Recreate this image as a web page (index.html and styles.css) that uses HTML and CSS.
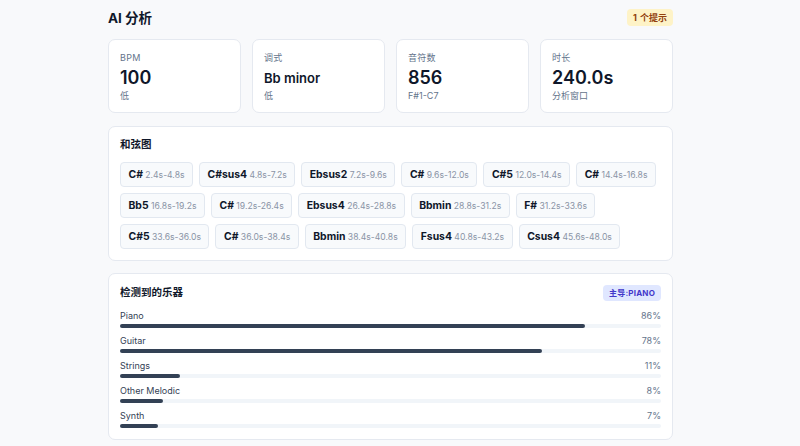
FILE: index.html
```html
<!DOCTYPE html>
<html lang="zh-CN">
<head>
  <meta charset="UTF-8" />
  <meta name="viewport" content="width=device-width, initial-scale=1.0"/>
  <title>AI 分析</title>
  <link rel="stylesheet" href="styles.css">
</head>
<body>
  <div class="page">
    <div class="page-header">
      <h1>AI 分析</h1>
      <span class="hint">1 个提示</span>
    </div>

    <div class="stats">
      <div class="stat">
        <div class="stat-label">BPM</div>
        <div class="stat-value">100</div>
        <div class="stat-sub">低</div>
      </div>
      <div class="stat">
        <div class="stat-label">调式</div>
        <div class="stat-value small">Bb minor</div>
        <div class="stat-sub">低</div>
      </div>
      <div class="stat">
        <div class="stat-label">音符数</div>
        <div class="stat-value">856</div>
        <div class="stat-sub">F#1-C7</div>
      </div>
      <div class="stat">
        <div class="stat-label">时长</div>
        <div class="stat-value">240.0s</div>
        <div class="stat-sub">分析窗口</div>
      </div>
    </div>

    <!-- 和弦图 -->
    <div class="card">
      <div class="card-title">和弦图</div>
      <div class="chords">
        <span class="chord"><b>C#</b> 2.4s-4.8s</span>
        <span class="chord"><b>C#sus4</b> 4.8s-7.2s</span>
        <span class="chord"><b>Ebsus2</b> 7.2s-9.6s</span>
        <span class="chord"><b>C#</b> 9.6s-12.0s</span>
        <span class="chord"><b>C#5</b> 12.0s-14.4s</span>
        <span class="chord"><b>C#</b> 14.4s-16.8s</span>
        <span class="chord"><b>Bb5</b> 16.8s-19.2s</span>
        <span class="chord"><b>C#</b> 19.2s-26.4s</span>
        <span class="chord"><b>Ebsus4</b> 26.4s-28.8s</span>
        <span class="chord"><b>Bbmin</b> 28.8s-31.2s</span>
        <span class="chord"><b>F#</b> 31.2s-33.6s</span>
        <span class="chord"><b>C#5</b> 33.6s-36.0s</span>
        <span class="chord"><b>C#</b> 36.0s-38.4s</span>
        <span class="chord"><b>Bbmin</b> 38.4s-40.8s</span>
        <span class="chord"><b>Fsus4</b> 40.8s-43.2s</span>
        <span class="chord"><b>Csus4</b> 45.6s-48.0s</span>
      </div>
    </div>

    <!-- 检测到的乐器 -->
    <div class="card">
      <div class="card-head">
        <div class="card-title">检测到的乐器</div>
        <span class="lead">主导:PIANO</span>
      </div>
      <div class="inst">
        <div class="inst-row"><span>Piano</span><span class="pct">86%</span></div>
        <div class="track"><div class="fill" style="width: 86%"></div></div>
      </div>
      <div class="inst">
        <div class="inst-row"><span>Guitar</span><span class="pct">78%</span></div>
        <div class="track"><div class="fill" style="width: 78%"></div></div>
      </div>
      <div class="inst">
        <div class="inst-row"><span>Strings</span><span class="pct">11%</span></div>
        <div class="track"><div class="fill" style="width: 11%"></div></div>
      </div>
      <div class="inst">
        <div class="inst-row"><span>Other Melodic</span><span class="pct">8%</span></div>
        <div class="track"><div class="fill" style="width: 8%"></div></div>
      </div>
      <div class="inst">
        <div class="inst-row"><span>Synth</span><span class="pct">7%</span></div>
        <div class="track"><div class="fill" style="width: 7%"></div></div>
      </div>
    </div>
  </div>
</body>
</html>
```

FILE: styles.css
```css
body {
  margin: 0; background: #f8f9fb; color: #0f172a;
  font-family: Inter, "Noto Sans CJK SC", sans-serif;
}
.page { width: 565px; margin-left: 108px; padding-top: 8px; }

.page-header {
  display: flex; justify-content: space-between; align-items: center;
  height: 18px; margin-bottom: 13px;
}
.page-header h1 { margin: 0; font-size: 13.5px; font-weight: 700; }
.hint {
  background: #fef3c7; color: #92400e; font-size: 9px; font-weight: 700;
  padding: 3px 6px; border-radius: 4px; line-height: 11px; word-spacing: 1px;
}

.stats {
  display: grid; grid-template-columns: repeat(4, 1fr); gap: 11px;
  margin-bottom: 13px;
}
.stat {
  background: white; border: 1px solid #e5e9f0; border-radius: 7px;
  padding: 12px 11px 10px; height: 50px;
}
.stat-label { font-size: 9px; color: #64748b; line-height: 12px; letter-spacing: 0.3px; }
.stat-value { font-size: 18px; font-weight: 600; line-height: 24px; margin-top: 2px; }
.stat-value.small { font-size: 13px; }
.stat-sub { font-size: 9px; color: #64748b; line-height: 12px; }

.card {
  background: white; border: 1px solid #e5e9f0; border-radius: 7px;
  padding: 11px; margin-bottom: 12px;
}
.card-title { font-size: 10.5px; font-weight: 700; line-height: 14px; }

.chords { display: flex; flex-wrap: wrap; gap: 6px; margin-top: 10px; }
.chord {
  background: #f8fafc; border: 1px solid #e2e8f0; border-radius: 4px;
  padding: 0 7.5px; height: 23px; line-height: 23px;
  font-size: 8.6px; color: #8a94a6;
}
.chord b { font-size: 10.4px; color: #0f172a; font-weight: 700; }

.card-head {
  display: flex; justify-content: space-between; align-items: center;
  height: 16px; margin-bottom: 9px;
}
.lead {
  background: #e0e7ff; color: #4338ca; font-size: 8px; font-weight: 700;
  padding: 3px 6px; border-radius: 4px; line-height: 10px; letter-spacing: 0.2px;
}

.inst { margin-bottom: 7px; }
.inst:last-child { margin-bottom: 0; }
.inst-row {
  display: flex; justify-content: space-between;
  font-size: 9px; color: #334155; line-height: 12px; margin-bottom: 2px;
}
.inst-row .pct { color: #64748b; }
.track { height: 4px; background: #f1f5f9; border-radius: 2px; }
.fill { height: 4px; background: #334155; border-radius: 2px; }
```
